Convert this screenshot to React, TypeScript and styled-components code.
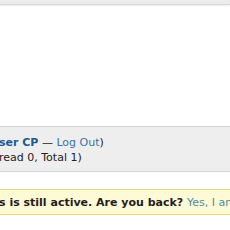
import styled, { createGlobalStyle } from 'styled-components';

const GlobalStyle = createGlobalStyle`
  html, body {
    margin: 0;
    padding: 0;
    background: #ffffff;
    overflow: hidden;
  }
  body {
    font-family: "DejaVu Sans", Verdana, sans-serif;
    font-size: 11px;
    color: #222222;
  }
`;

const Page = styled.div`
  width: 230px;
  height: 230px;
  display: flex;
  flex-direction: column;
  overflow: hidden;
`;

const TopBar = styled.div`
  height: 4px;
  background: #ececec;
  border-bottom: 1px solid #d8d8d8;
  box-shadow: 0 1px 2px rgba(0, 0, 0, 0.08);
`;

const Spacer = styled.div<{ $h: number }>`
  height: ${(p) => p.$h}px;
  flex-shrink: 0;
`;

const WelcomeBox = styled.div`
  background: #eeeeee;
  border-top: 1px solid #d4d4d4;
  border-bottom: 1px solid #d4d4d4;
  margin-right: -10px;
  padding: 8px 0 6px;
  line-height: 15px;
  white-space: nowrap;
`;

const Line = styled.div`
  margin-left: -1px;
`;

const Link = styled.a<{ $bold?: boolean }>`
  color: ${(p) => (p.$bold ? '#1d5a8f' : '#3a72a8')};
  font-weight: ${(p) => (p.$bold ? 700 : 400)};
  text-decoration: none;
`;

const Notice = styled.div`
  background: #fffad6;
  border-top: 1px solid #eedc7a;
  border-bottom: 1px solid #eedc7a;
  margin-right: -10px;
  padding: 5px 0 4px;
  line-height: 15px;
  white-space: nowrap;
  font-weight: 700;
  color: #1e1e1e;
`;

const NoticeLink = styled.a`
  color: #4c8c9e;
  font-weight: 400;
  text-decoration: none;
`;

export default function App() {
  return (
    <>
      <GlobalStyle />
      <Page>
        <TopBar />
        <Spacer $h={121} />
        <WelcomeBox>
          <Line>
            <Link $bold href="#">ser CP</Link> — <Link href="#">Log Out</Link>)
          </Line>
          <Line>read 0, Total 1)</Line>
        </WelcomeBox>
        <Spacer $h={17} />
        <Notice>
          <Line>
            s is still active. Are you back? <NoticeLink href="#">Yes, I am</NoticeLink>
          </Line>
        </Notice>
      </Page>
    </>
  );
}
